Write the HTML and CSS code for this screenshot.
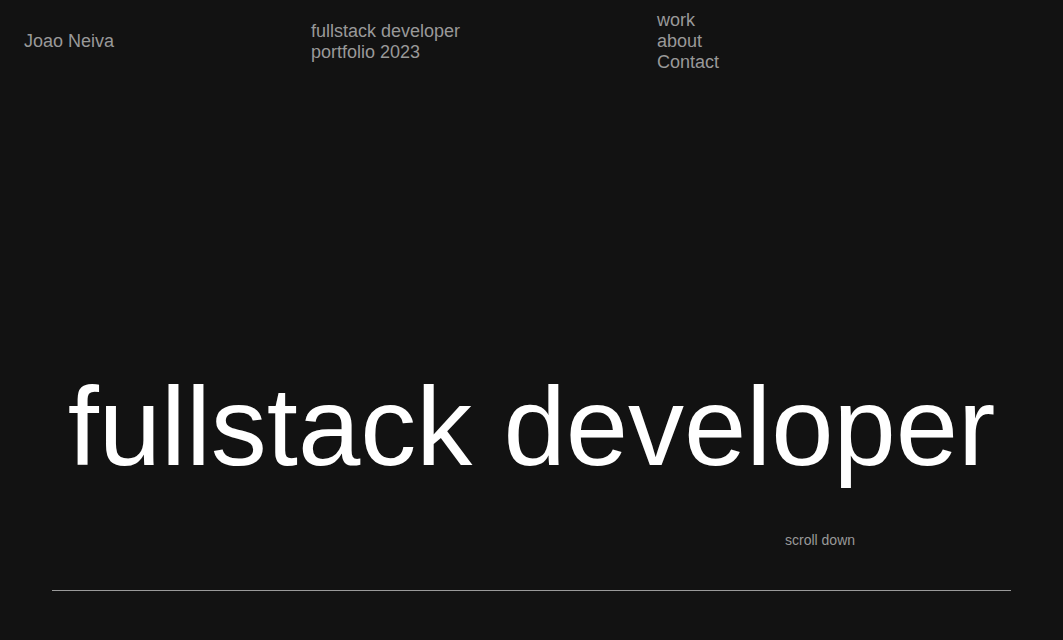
FILE: index.html
```html
<!DOCTYPE html>
<html lang="en">
<head>
<meta charset="utf-8">
<title>Joao Neiva</title>
<link rel="stylesheet" href="styles.css">
</head>
<body>
<header class="site-header">
  <div class="brand">Joao Neiva</div>
  <div class="tagline">fullstack developer<br>portfolio 2023</div>
  <nav class="nav">
    <a href="#">work</a>
    <a href="#">about</a>
    <a href="#">Contact</a>
  </nav>
</header>
<main class="hero">
  <h1 class="hero-title">fullstack developer</h1>
  <div class="scroll-row"><span class="scroll">scroll down</span></div>
  <hr class="divider">
</main>
</body>
</html>
```
FILE: styles.css
```css
html, body {
  margin: 0;
  padding: 0;
  background: #121212;
  height: 100%;
}
body {
  font-family: "Liberation Sans", Arial, sans-serif;
  color: #999;
  overflow: hidden;
}
.site-header {
  display: grid;
  grid-template-columns: 287px 346px 1fr;
  align-items: center;
  padding: 1px 24px 0;
  height: 81px;
  font-size: 18px;
  line-height: 21px;
}
.nav {
  display: flex;
  flex-direction: column;
}
.nav a {
  color: #999;
  text-decoration: none;
}
.hero {
  display: flex;
  flex-direction: column;
  align-items: center;
}
.hero-title {
  margin: 289px 0 0;
  font-size: 112px;
  font-weight: 400;
  line-height: 112px;
  color: #fff;
  white-space: nowrap;
}
.scroll-row {
  width: 100%;
  margin-top: 49px;
  font-size: 14px;
  line-height: 16px;
}
.scroll {
  margin-left: 785px;
}
.divider {
  width: 959px;
  margin: 42px 0 0;
  border: 0;
  height: 1px;
  background: #9a9a9a;
}
```
